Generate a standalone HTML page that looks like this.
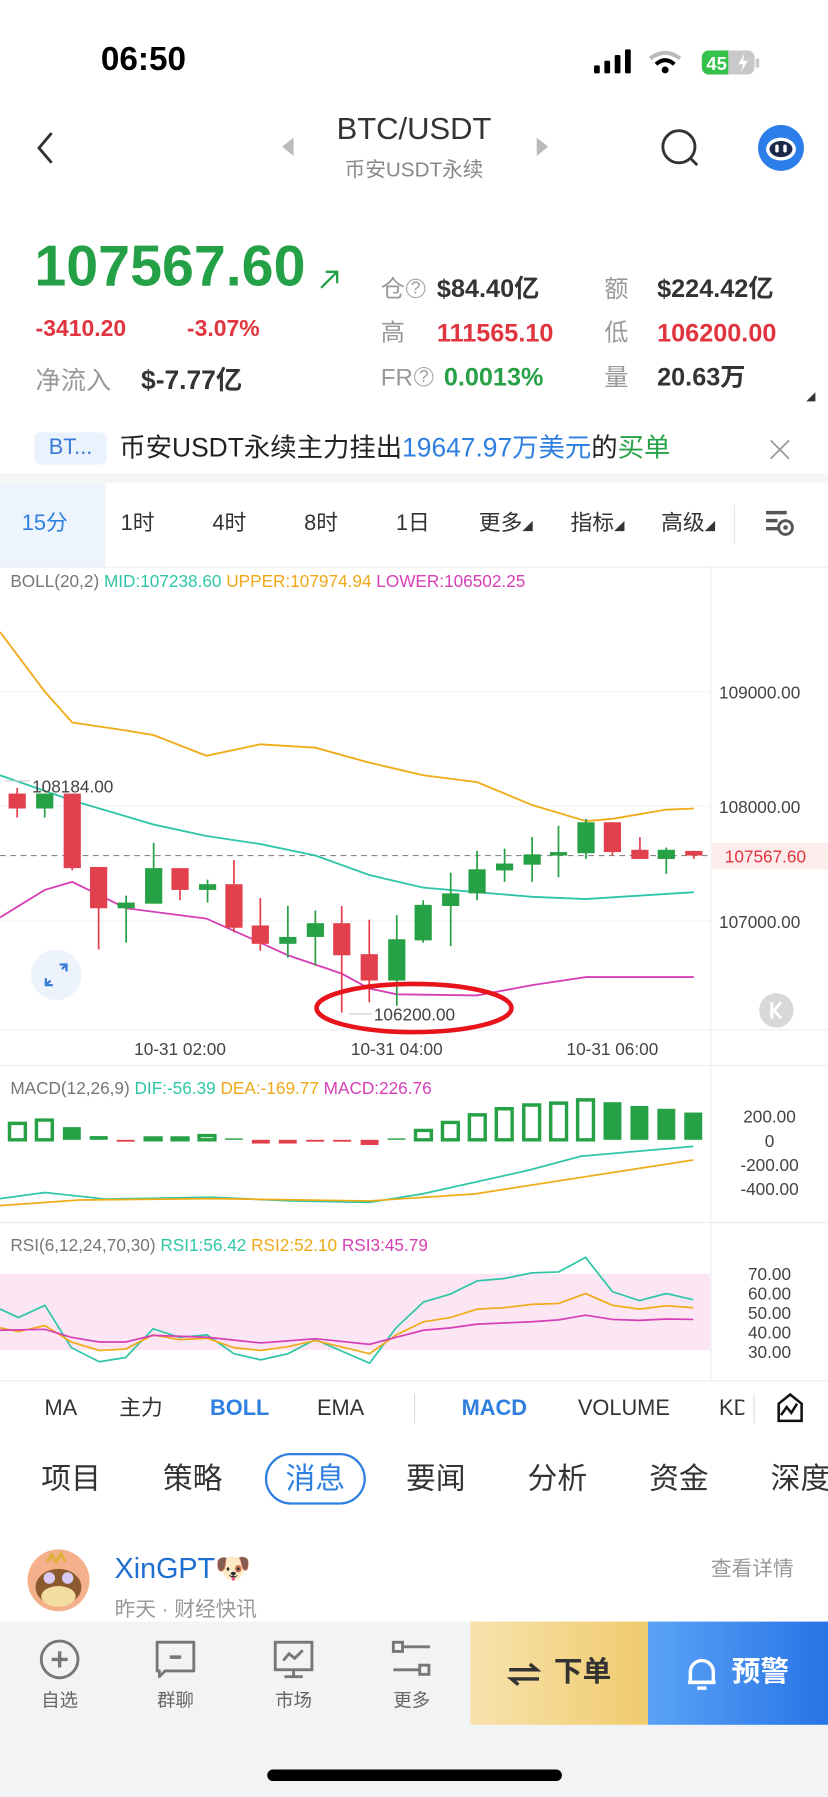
<!DOCTYPE html>
<html><head><meta charset="utf-8">
<style>
*{margin:0;padding:0;box-sizing:border-box}
html,body{width:828px;height:1797px;overflow:hidden;background:#fff}
body{font-family:"Liberation Sans","Noto Sans CJK SC",sans-serif;color:#222}
#w{position:absolute;left:0;top:0;width:722px;height:1567px;transform:scale(1.14681);transform-origin:0 0;background:#fff}
.a{position:absolute;white-space:nowrap;line-height:1}
.g{color:#999}
.b{font-weight:bold}
.red{color:#e0353f}
.grn{color:#27a146}
.tf,.ind,.tab,.bl{position:absolute;white-space:nowrap;line-height:1;transform:translateX(-50%)}
.tf{top:447px;font-size:19px;color:#333}
.ind{top:1219px;font-size:19px;color:#333}
.tab{top:1276px;font-size:26px;color:#333}
.bl{top:1476px;font-size:16px;color:#666}
.ax{font-size:15px;fill:#444;font-family:"Liberation Sans",sans-serif}
</style></head><body><div id="w">
<!-- status -->
<div class="a b" style="left:88px;top:38px;font-size:29px;color:#000">06:50</div>
<svg class="a" style="left:517px;top:42px" width="150" height="26">
<rect x="1" y="15" width="5" height="7" rx="1" fill="#000"/><rect x="10" y="11" width="5" height="11" rx="1" fill="#000"/><rect x="19" y="6" width="5" height="16" rx="1" fill="#000"/><rect x="28" y="1" width="5" height="21" rx="1" fill="#000"/>
<path d="M50 9 Q63 -1 76 9" stroke="#bbb" stroke-width="3.5" fill="none"/><path d="M55 14 Q63 7 71 14" stroke="#000" stroke-width="3.5" fill="none"/><circle cx="63" cy="19" r="3" fill="#000"/>
<rect x="95" y="2" width="46" height="21" rx="6" fill="#c8c8c8"/><rect x="95" y="2" width="22" height="21" rx="6" fill="#35c24a"/><rect x="110" y="2" width="8" height="21" fill="#35c24a"/><rect x="142" y="9" width="3" height="8" rx="1" fill="#c8c8c8"/>
<text x="99" y="19" font-size="16" font-weight="bold" fill="#fff" font-family="Liberation Sans">45</text><path d="M132 5 l-5 9 h4 l-2 7 l6 -10 h-4 z" fill="#fff"/>
</svg>
<!-- nav -->
<svg class="a" style="left:30px;top:113px" width="20" height="32"><path d="M15 3 L4 16 L15 29" stroke="#333" stroke-width="2.5" fill="none"/></svg>
<svg class="a" style="left:244px;top:119px" width="14" height="18"><path d="M12 1 L2 9 L12 17 Z" fill="#bbb"/></svg>
<svg class="a" style="left:466px;top:119px" width="14" height="18"><path d="M2 1 L12 9 L2 17 Z" fill="#bbb"/></svg>
<div class="a" style="left:361px;top:99px;font-size:27px;color:#333;transform:translateX(-50%)">BTC/USDT</div>
<div class="a" style="left:361px;top:139px;font-size:18px;color:#888;transform:translateX(-50%)">币安USDT永续</div>
<svg class="a" style="left:574px;top:110px" width="40" height="40"><circle cx="18" cy="18" r="14" stroke="#333" stroke-width="2.5" fill="none"/><path d="M28 28 L34 34" stroke="#333" stroke-width="2.5"/></svg>
<svg class="a" style="left:660px;top:108px" width="42" height="42"><circle cx="21" cy="21" r="20" fill="#2b7de9"/><ellipse cx="21" cy="22" rx="13" ry="10" fill="#fff"/><ellipse cx="21" cy="22" rx="10" ry="7" fill="#1b2a4a"/><rect x="16" y="18" width="3" height="7" rx="1.5" fill="#fff"/><rect x="23" y="18" width="3" height="7" rx="1.5" fill="#fff"/></svg>
<!-- price -->
<div class="a b grn" style="left:30px;top:207px;font-size:50px;color:#24a047">107567.60</div>
<svg class="a" style="left:276px;top:233px" width="22" height="22"><path d="M4 18 L18 4 M8 4 H18 V14" stroke="#24a047" stroke-width="2" fill="none"/></svg>
<div class="a b red" style="left:31px;top:277px;font-size:20px">-3410.20</div>
<div class="a b red" style="left:163px;top:277px;font-size:20px">-3.07%</div>
<div class="a g" style="left:31px;top:321px;font-size:22px">净流入</div>
<div class="a b" style="left:123px;top:320px;font-size:23px;color:#333">$-7.77亿</div>
<div class="a g" style="left:332px;top:242px;font-size:21px">仓<span style="font-size:15px;border:1.5px solid #aaa;border-radius:50%;display:inline-block;width:17px;height:17px;text-align:center;line-height:15px;vertical-align:3px;margin-left:1px">?</span></div>
<div class="a b" style="left:381px;top:241px;font-size:22px;color:#333">$84.40亿</div>
<div class="a g" style="left:527px;top:242px;font-size:21px">额</div>
<div class="a b" style="left:573px;top:241px;font-size:22px;color:#333">$224.42亿</div>
<div class="a g" style="left:332px;top:280px;font-size:21px">高</div>
<div class="a b red" style="left:381px;top:280px;font-size:22px">111565.10</div>
<div class="a g" style="left:527px;top:280px;font-size:21px">低</div>
<div class="a b red" style="left:573px;top:280px;font-size:22px">106200.00</div>
<div class="a g" style="left:332px;top:319px;font-size:21px">FR<span style="font-size:15px;border:1.5px solid #aaa;border-radius:50%;display:inline-block;width:17px;height:17px;text-align:center;line-height:15px;vertical-align:3px;margin-left:1px">?</span></div>
<div class="a b grn" style="left:387px;top:318px;font-size:22px">0.0013%</div>
<div class="a g" style="left:527px;top:319px;font-size:21px">量</div>
<div class="a b" style="left:573px;top:318px;font-size:22px;color:#333">20.63万</div>
<svg class="a" style="left:702px;top:341px" width="10" height="10"><path d="M9 1 V9 H1 Z" fill="#333"/></svg>
<!-- banner -->
<div class="a" style="left:30px;top:377px;width:63px;height:28px;background:#eaf2fd;border-radius:5px;color:#3a7bd5;font-size:19px;line-height:28px;text-align:center">BT...</div>
<div class="a" style="left:104px;top:379px;font-size:23px;color:#222">币安USDT永续主力挂出<span style="color:#2f7fe0">19647.97万美元</span>的<span style="color:#27a146">买单</span></div>
<svg class="a" style="left:670px;top:382px" width="20" height="20"><path d="M2 2 L18 18 M18 2 L2 18" stroke="#999" stroke-width="1.5"/></svg>
<div class="a" style="left:0;top:413px;width:722px;height:8px;background:#f4f5f7"></div>
<!-- timeframe -->
<div class="a" style="left:0;top:421px;width:92px;height:74px;background:#eef4fc"></div>
<div class="tf" style="left:39px;color:#2f7fe0">15分</div>
<div class="tf" style="left:120px">1时</div>
<div class="tf" style="left:200px">4时</div>
<div class="tf" style="left:280px">8时</div>
<div class="tf" style="left:360px">1日</div>
<div class="tf" style="left:441px">更多<span style="font-size:9px">◢</span></div>
<div class="tf" style="left:521px">指标<span style="font-size:9px">◢</span></div>
<div class="tf" style="left:600px">高级<span style="font-size:9px">◢</span></div>
<div class="a" style="left:640px;top:440px;width:1px;height:34px;background:#e6e6e6"></div>
<svg class="a" style="left:666px;top:443px" width="30" height="28"><path d="M2 4 H20 M2 11 H12 M2 18 H12" stroke="#555" stroke-width="3"/><circle cx="19" cy="17" r="6" stroke="#555" stroke-width="2.5" fill="none"/><circle cx="19" cy="17" r="2" fill="#555"/></svg>
<div class="a" style="left:0;top:494px;width:722px;height:1px;background:#eee"></div>
<!-- chart -->
<svg class="a" style="left:0;top:0" width="722" height="1567" viewBox="0 0 722 1567">
<line x1="620" y1="495" x2="620" y2="1205" stroke="#eee"/>
<line x1="0" y1="603" x2="620" y2="603" stroke="#f3f3f5"/>
<line x1="0" y1="703" x2="620" y2="703" stroke="#f3f3f5"/>
<line x1="0" y1="803" x2="620" y2="803" stroke="#f3f3f5"/>
<line x1="0" y1="898" x2="722" y2="898" stroke="#eee"/>
<line x1="0" y1="929" x2="722" y2="929" stroke="#eee"/>
<line x1="0" y1="1066" x2="722" y2="1066" stroke="#eee"/>
<line x1="0" y1="1204" x2="722" y2="1204" stroke="#eee"/>
<text x="9" y="512" font-size="15" font-family="Liberation Sans"><tspan fill="#777">BOLL(20,2) </tspan><tspan fill="#2fc6a8">MID:107238.60 </tspan><tspan fill="#f0a818">UPPER:107974.94 </tspan><tspan fill="#d63fb6">LOWER:106502.25</tspan></text>
<text class="ax" x="627" y="609">109000.00</text>
<text class="ax" x="627" y="709">108000.00</text>
<text class="ax" x="627" y="809">107000.00</text>
<rect x="621" y="735" width="101" height="23" fill="#fdecec"/>
<text x="632" y="752" font-size="15" fill="#e0353f" font-family="Liberation Sans">107567.60</text>
<line x1="0" y1="746" x2="620" y2="746" stroke="#888" stroke-dasharray="5 4"/>
<polyline fill="none" stroke="#f0ab18" stroke-width="1.6" points="0,551 39,603 63,630 110,637 134,641 180,659 227,649 275,652 322,665 369,676 416,682 464,702 511,716 534,714 581,706 605,705"/>
<polyline fill="none" stroke="#2fc6a8" stroke-width="1.6" points="0,676 63,698 134,719 180,729 227,736 275,746 322,763 369,774 416,778 464,782 511,784 557,781 605,778"/>
<polyline fill="none" stroke="#d63fb6" stroke-width="1.6" points="0,800 39,776 63,769 110,792 180,801 227,822 251,833 298,849 322,862 346,867 416,868 464,859 511,852 605,852"/>
<g stroke-width="1.5">
<path stroke="#e2404d" d="M15 687V713M63 692V759M86 756V828M157 757V785M204 750V813M227 783V829M298 790V883M322 802V874M534 717V746M558 730V749M605 742V749"/>
<path stroke="#27a146" d="M39 692V713M110 781V822M134 735V788M181 767V787M251 790V835M275 794V842M346 798V877M369 785V822M393 761V825M416 742V785M440 740V769M464 730V769M487 720V765M511 714V749M581 739V762"/>
</g>
<g fill="#e2404d">
<rect x="7.5" y="692" width="15" height="13"/><rect x="55.5" y="692" width="15" height="65"/><rect x="78.5" y="756" width="15" height="36"/><rect x="149.5" y="757" width="15" height="19"/><rect x="196.5" y="771" width="15" height="38"/><rect x="219.5" y="807" width="15" height="16"/><rect x="290.5" y="805" width="15" height="28"/><rect x="314.5" y="832" width="15" height="23"/><rect x="526.5" y="717" width="15" height="26"/><rect x="550.5" y="741" width="15" height="8"/><rect x="597.5" y="742" width="15" height="4"/>
</g>
<g fill="#27a146">
<rect x="31.5" y="692" width="15" height="13"/><rect x="102.5" y="787" width="15" height="5"/><rect x="126.5" y="757" width="15" height="31"/><rect x="173.5" y="771" width="15" height="5"/><rect x="243.5" y="817" width="15" height="6"/><rect x="267.5" y="805" width="15" height="12"/><rect x="338.5" y="819" width="15" height="36"/><rect x="361.5" y="789" width="15" height="31"/><rect x="385.5" y="779" width="15" height="11"/><rect x="408.5" y="758" width="15" height="21"/><rect x="432.5" y="753" width="15" height="6"/><rect x="456.5" y="745" width="15" height="9"/><rect x="479.5" y="743" width="15" height="3"/><rect x="503.5" y="717" width="15" height="27"/><rect x="573.5" y="741" width="15" height="8"/>
</g>
<line x1="4" y1="681" x2="26" y2="681" stroke="#ccc"/>
<text x="28" y="691" font-size="15" fill="#444" font-family="Liberation Sans">108184.00</text>
<line x1="304" y1="884" x2="324" y2="884" stroke="#ccc"/>
<text x="326" y="890" font-size="15" fill="#444" font-family="Liberation Sans">106200.00</text>
<ellipse cx="361" cy="879" rx="85" ry="21" fill="none" stroke="#e8141c" stroke-width="4"/>
<circle cx="49" cy="850" r="22" fill="#edf3fc"/>
<path d="M44 855 L40 859 M40 853 V859 H46 M54 845 L58 841 M52 841 H58 V847" stroke="#3a7bd5" stroke-width="2" fill="none"/>
<circle cx="677" cy="881" r="15" fill="#d8d8d8"/>
<path d="M673 874 V888 M681 874 L675 881 L681 888" stroke="#fff" stroke-width="2.5" fill="none"/>
<text class="ax" x="157" y="920" text-anchor="middle">10-31 02:00</text>
<text class="ax" x="346" y="920" text-anchor="middle">10-31 04:00</text>
<text class="ax" x="534" y="920" text-anchor="middle">10-31 06:00</text>
<!-- MACD -->
<text x="9" y="954" font-size="15" font-family="Liberation Sans"><tspan fill="#777">MACD(12,26,9) </tspan><tspan fill="#2fc6a8">DIF:-56.39 </tspan><tspan fill="#f0a818">DEA:-169.77 </tspan><tspan fill="#d63fb6">MACD:226.76</tspan></text>
<text class="ax" x="671" y="979" text-anchor="middle">200.00</text>
<text class="ax" x="671" y="1000" text-anchor="middle">0</text>
<text class="ax" x="671" y="1021" text-anchor="middle">-200.00</text>
<text class="ax" x="671" y="1042" text-anchor="middle">-400.00</text>
<g transform="matrix(0.4604 0 0 0.41 0 924.2)">
<g fill="none" stroke="#27a146" stroke-width="3" vector-effect="non-scaling-stroke">
<rect x="18" y="135" width="30" height="35" vector-effect="non-scaling-stroke"/><rect x="69" y="128" width="30" height="42" vector-effect="non-scaling-stroke"/>
<rect x="275" y="166" width="30" height="4" vector-effect="non-scaling-stroke"/><rect x="326" y="166" width="30" height="4" vector-effect="non-scaling-stroke"/><rect x="377" y="161" width="30" height="9" vector-effect="non-scaling-stroke"/>
<rect x="787" y="150" width="30" height="20" vector-effect="non-scaling-stroke"/><rect x="838" y="133" width="30" height="37" vector-effect="non-scaling-stroke"/><rect x="889" y="117" width="30" height="53" vector-effect="non-scaling-stroke"/><rect x="940" y="104" width="30" height="66" vector-effect="non-scaling-stroke"/><rect x="992" y="96" width="30" height="74" vector-effect="non-scaling-stroke"/><rect x="1043" y="92" width="30" height="78" vector-effect="non-scaling-stroke"/><rect x="1094" y="85" width="30" height="85" vector-effect="non-scaling-stroke"/>
</g>
<g fill="#27a146">
<rect x="119" y="143" width="34" height="27"/><rect x="170" y="162" width="34" height="8"/><rect x="426" y="167" width="34" height="3"/><rect x="734" y="167" width="34" height="3"/>
<rect x="1143" y="90" width="34" height="80"/><rect x="1194" y="98" width="34" height="72"/><rect x="1245" y="104" width="34" height="66"/><rect x="1296" y="112" width="34" height="58"/>
</g>
<g fill="#e2404d">
<rect x="221" y="170" width="34" height="4"/><rect x="477" y="170" width="34" height="8"/><rect x="528" y="170" width="34" height="8"/><rect x="580" y="170" width="34" height="4"/><rect x="631" y="170" width="34" height="4"/><rect x="683" y="170" width="34" height="11"/>
</g>
<polyline fill="none" stroke="#2fc6a8" stroke-width="1.5" vector-effect="non-scaling-stroke" points="0,295 85,282 200,296 400,292 550,300 700,303 800,285 1000,235 1100,205 1313,184"/>
<polyline fill="none" stroke="#f0ab18" stroke-width="1.5" vector-effect="non-scaling-stroke" points="0,310 150,298 400,295 700,300 900,285 1100,250 1313,213"/>
<!-- RSI -->
<rect x="0" y="455" width="1345" height="162" fill="#fce6f4"/>
<polyline fill="none" stroke="#2fc6a8" stroke-width="1.5" vector-effect="non-scaling-stroke" points="0,530 35,548 85,522 135,612 188,642 238,633 290,572 340,590 392,585 443,625 494,638 545,625 597,595 700,645 750,570 802,515 853,498 904,470 955,465 1007,453 1058,451 1109,420 1160,493 1211,512 1262,497 1313,510"/>
<polyline fill="none" stroke="#f0ab18" stroke-width="1.5" vector-effect="non-scaling-stroke" points="0,570 35,578 85,565 135,600 188,618 238,615 290,585 340,595 392,592 443,612 494,618 545,610 597,597 700,625 750,585 802,557 853,548 904,530 955,527 1007,520 1058,518 1109,497 1160,522 1211,530 1262,523 1313,527"/>
<polyline fill="none" stroke="#d63fb6" stroke-width="1.5" vector-effect="non-scaling-stroke" points="0,575 85,573 135,590 188,600 238,600 290,586 392,590 494,602 597,593 700,605 750,590 802,575 853,570 904,562 1007,557 1058,553 1109,543 1160,552 1211,554 1262,551 1313,552"/>
</g>
<text x="9" y="1091" font-size="15" font-family="Liberation Sans"><tspan fill="#777">RSI(6,12,24,70,30) </tspan><tspan fill="#2fc6a8">RSI1:56.42 </tspan><tspan fill="#f0a818">RSI2:52.10 </tspan><tspan fill="#d63fb6">RSI3:45.79</tspan></text>
<text class="ax" x="671" y="1116" text-anchor="middle">70.00</text>
<text class="ax" x="671" y="1133" text-anchor="middle">60.00</text>
<text class="ax" x="671" y="1150" text-anchor="middle">50.00</text>
<text class="ax" x="671" y="1167" text-anchor="middle">40.00</text>
<text class="ax" x="671" y="1184" text-anchor="middle">30.00</text>
</svg>
<!-- indicator row -->
<div class="ind" style="left:53px">MA</div>
<div class="ind" style="left:123px">主力</div>
<div class="ind b" style="left:209px;color:#2f7fe0">BOLL</div>
<div class="ind" style="left:297px">EMA</div>
<div class="a" style="left:361px;top:1215px;width:1px;height:26px;background:#ddd"></div>
<div class="ind b" style="left:431px;color:#2f7fe0">MACD</div>
<div class="ind" style="left:544px">VOLUME</div>
<div class="a" style="left:627px;top:1219px;font-size:19px;color:#333;width:22px;overflow:hidden">KD</div>
<div class="a" style="left:657px;top:1215px;width:1px;height:26px;background:#ddd"></div>
<svg class="a" style="left:676px;top:1214px" width="26" height="28"><path d="M13 2 L23 10 V25 H3 V10 Z" stroke="#111" stroke-width="2.2" fill="none"/><path d="M5 20 L10 13 L14 18 L19 10" stroke="#111" stroke-width="2.2" fill="none"/></svg>
<!-- tabs -->
<div class="tab" style="left:62px">项目</div>
<div class="tab" style="left:168px">策略</div>
<div class="a" style="left:231px;top:1267px;width:88px;height:45px;border:2px solid #2f7fe0;border-radius:23px"></div>
<div class="tab" style="left:275px;color:#2f7fe0">消息</div>
<div class="tab" style="left:380px">要闻</div>
<div class="tab" style="left:486px">分析</div>
<div class="tab" style="left:592px">资金</div>
<div class="tab" style="left:698px">深度</div>
<!-- news -->
<svg class="a" style="left:23px;top:1350px" width="56" height="56"><circle cx="28" cy="28" r="27" fill="#f4b08a"/><ellipse cx="28" cy="34" rx="20" ry="16" fill="#8a5a2e"/><ellipse cx="28" cy="42" rx="15" ry="9" fill="#f3dca0"/><circle cx="20" cy="26" r="5" fill="#d9c9f5"/><circle cx="36" cy="26" r="5" fill="#d9c9f5"/><path d="M18 12 L22 6 L26 12 L30 5 L34 12" stroke="#e0b040" stroke-width="3" fill="none"/></svg>
<div class="a" style="left:100px;top:1356px;font-size:25px;color:#1f6fd0">XinGPT🐶</div>
<div class="a" style="left:100px;top:1394px;font-size:18px;color:#999">昨天 · 财经快讯</div>
<div class="a" style="left:620px;top:1359px;font-size:18px;color:#999">查看详情</div>
<!-- bottom bar -->
<div class="a" style="left:0;top:1414px;width:722px;height:153px;background:#f2f3f5"></div>
<svg class="a" style="left:33px;top:1428px" width="38" height="38"><circle cx="19" cy="19" r="16" stroke="#777" stroke-width="2.5" fill="none"/><path d="M19 12 V26 M12 19 H26" stroke="#777" stroke-width="3"/></svg>
<svg class="a" style="left:134px;top:1428px" width="38" height="38"><path d="M3 4 H35 V29 H10 L5 34 V29 H3 Z" stroke="#777" stroke-width="2.5" fill="none" stroke-linejoin="round"/><path d="M14 17 H24" stroke="#777" stroke-width="3"/></svg>
<svg class="a" style="left:237px;top:1428px" width="38" height="38"><rect x="3" y="4" width="32" height="24" stroke="#777" stroke-width="2.5" fill="none"/><path d="M19 28 V34 M11 34 H27" stroke="#777" stroke-width="2.5"/><path d="M10 20 L15 14 L20 18 L27 11" stroke="#777" stroke-width="2.5" fill="none"/></svg>
<svg class="a" style="left:340px;top:1428px" width="38" height="38"><path d="M3 8 H35 M3 28 H35" stroke="#777" stroke-width="2.5"/><rect x="3" y="4" width="8" height="8" fill="#f2f3f5" stroke="#777" stroke-width="2.5"/><rect x="26" y="24" width="8" height="8" fill="#f2f3f5" stroke="#777" stroke-width="2.5"/></svg>
<div class="bl" style="left:52px">自选</div>
<div class="bl" style="left:153px">群聊</div>
<div class="bl" style="left:256px">市场</div>
<div class="bl" style="left:359px">更多</div>
<div class="a" style="left:410px;top:1414px;width:155px;height:90px;background:linear-gradient(90deg,#f8e3ad,#f0cb6e)"></div>
<div class="a" style="left:565px;top:1414px;width:157px;height:90px;background:linear-gradient(90deg,#5ba3f7,#2874e6)"></div>
<svg class="a" style="left:442px;top:1449px" width="30" height="22"><path d="M2 7 H26 L20 2 M28 15 H4 L10 20" stroke="#333" stroke-width="3" fill="none"/></svg>
<div class="a b" style="left:483px;top:1446px;font-size:25px;color:#333">下单</div>
<svg class="a" style="left:598px;top:1445px" width="28" height="30"><path d="M4 22 V13 A10 10 0 0 1 24 13 V22 Z" stroke="#fff" stroke-width="3" fill="none" stroke-linejoin="round"/><path d="M2 22 H26 M10 27 H18" stroke="#fff" stroke-width="3"/></svg>
<div class="a b" style="left:638px;top:1446px;font-size:25px;color:#fff">预警</div>
<div class="a" style="left:233px;top:1543px;width:257px;height:10px;background:#000;border-radius:5px"></div>
</div></body></html>
